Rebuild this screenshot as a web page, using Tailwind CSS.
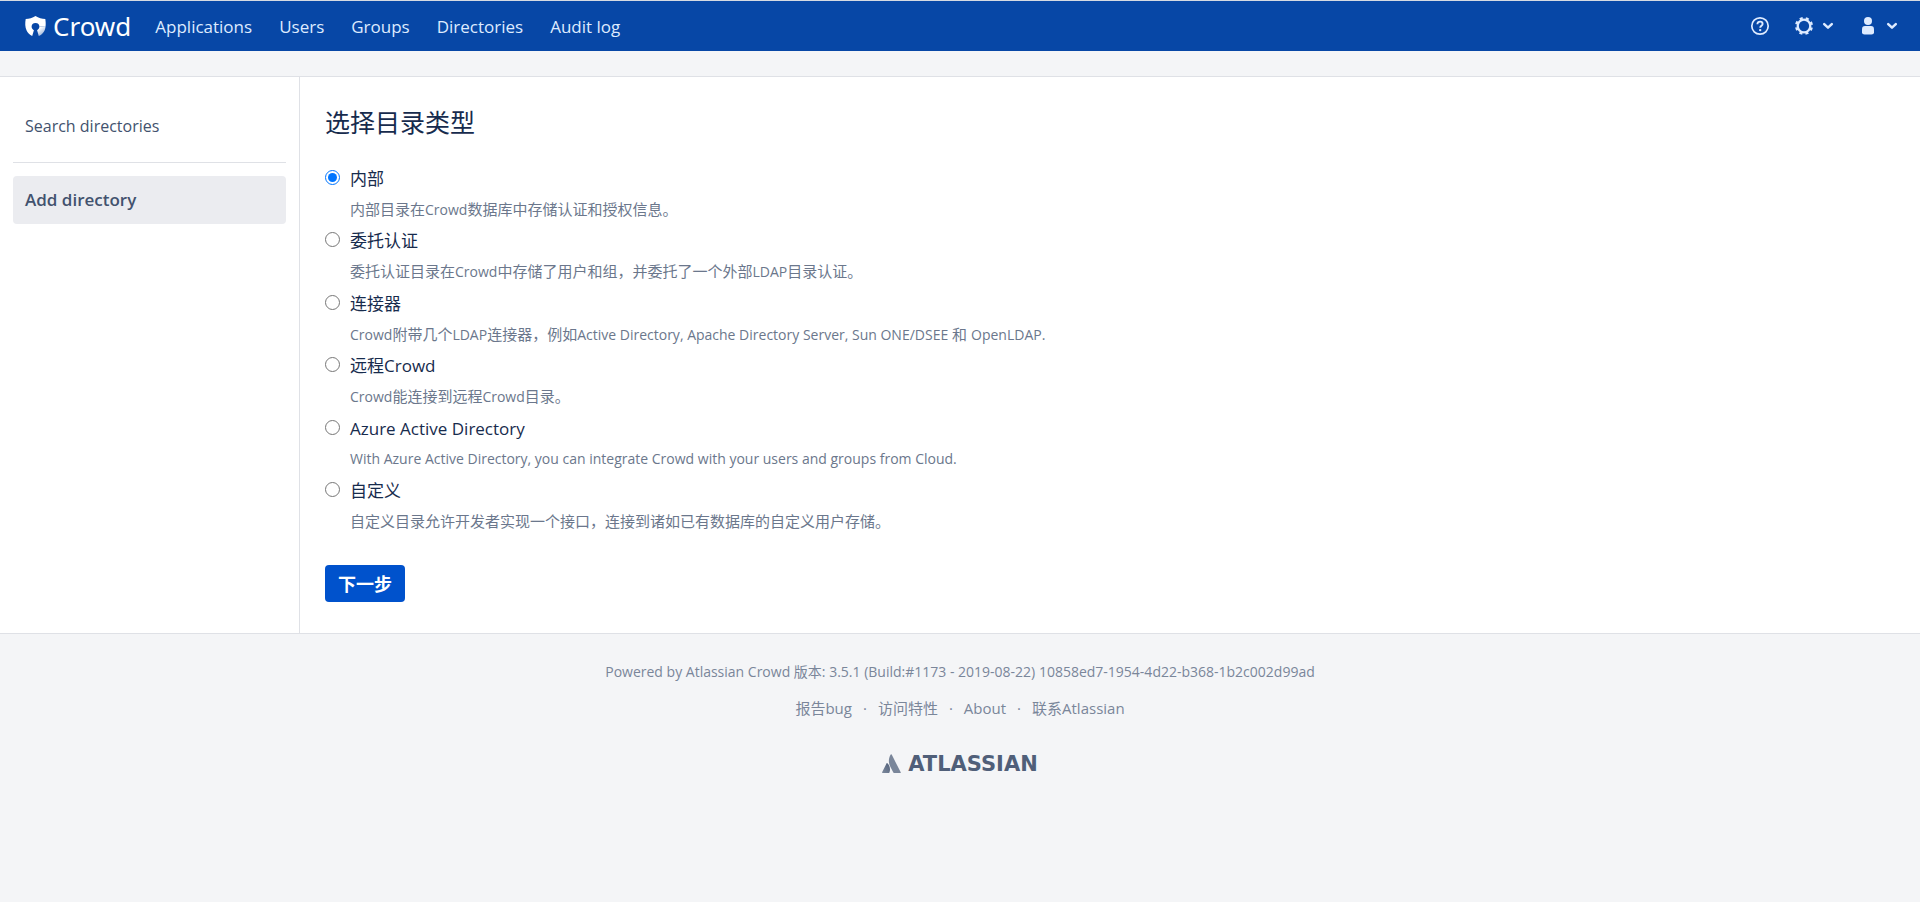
<!DOCTYPE html>
<html lang="zh-CN">
<head>
<meta charset="utf-8">
<title>选择目录类型 - Crowd</title>
<script src="https://cdn.jsdelivr.net/npm/@tailwindcss/browser@4"></script>
</head>
<body class="min-h-screen bg-[#f4f5f7] font-['Open_Sans','Noto_Sans_CJK_SC',sans-serif] text-base text-[#172b4d]">
<header class="flex h-[51px] items-center justify-between border-t border-[#d5dae2] bg-[#0747a6] pl-[25px] pr-[22px] text-[#deebff]">
  <div class="flex items-center">
    <a href="#" class="flex items-center gap-[7px] text-white">
      <svg class="h-5 w-[21px]" viewBox="0 0 21 20" aria-hidden="true">
        <defs><linearGradient id="shield" x1="0.3" y1="0.2" x2="0.8" y2="1"><stop offset="0" stop-color="#fff"/><stop offset="1" stop-color="#fff" stop-opacity=".5"/></linearGradient></defs>
        <path fill="#fff" d="M10.500 0C7.500 2 4 2.900 0.700 3C0 7 0 11 1.600 14.500C2.800 17 4.700 19 7.200 20L8.900 14.200C7.600 13.600 6.600 12.400 6.600 10.800A3.900 3.900 0 0 1 14.400 10.800L20.600 10C20.900 7.500 20.600 5 20.300 3C17 2.900 13.500 2 10.500 0Z"/>
        <path fill="url(#shield)" d="M14.400 10.800C14.400 12.400 13.400 13.600 12.100 14.200L13.800 20C18.500 18 20.400 14 20.600 10Z"/>
      </svg>
      <span class="font-['Noto_Sans',sans-serif] text-[26px] leading-8">Crowd</span>
    </a>
    <nav class="ml-6 flex items-center gap-[27px] pt-px text-[17px]">
      <a href="#">Applications</a><a href="#">Users</a><a href="#">Groups</a><a href="#">Directories</a><a href="#">Audit log</a>
    </nav>
  </div>
  <div class="flex items-center gap-6">
    <button type="button" aria-label="Help">
      <svg class="size-5" viewBox="0 0 20 20" fill="none" stroke="currentColor"><circle cx="10" cy="10" r="8.200" stroke-width="1.700"/><path stroke-width="1.900" d="M7.400 8.200C7.400 6.600 8.500 5.600 10.100 5.600S12.600 6.600 12.600 7.900C12.600 9.700 10.200 9.700 10.200 11.700"/><circle cx="10.200" cy="14.100" r="1.200" fill="currentColor" stroke="none"/></svg>
    </button>
    <button type="button" aria-label="Administration" class="flex items-center gap-2">
      <svg class="size-5" viewBox="0 0 20 20" fill="none" stroke="currentColor"><circle cx="10" cy="10" r="6.300" stroke-width="2.300"/><circle cx="10" cy="10" r="7.900" stroke-width="2.200" stroke-dasharray="3.100 3.104" stroke-dashoffset="-1.550"/></svg>
      <svg class="h-2 w-3" viewBox="0 0 12 8" fill="none" stroke="currentColor" stroke-width="2.500" stroke-linecap="round" stroke-linejoin="round"><path d="M2.200 2.200L6 5.700L9.800 2.200"/></svg>
    </button>
    <button type="button" aria-label="User" class="flex items-center gap-2">
      <svg class="size-5" viewBox="0 0 20 20" fill="currentColor"><circle cx="10" cy="5" r="4"/><path d="M4 13.200Q4 10 7 10H13Q16 10 16 13.200V16.500Q16 18.500 13.500 18.500H6.500Q4 18.500 4 16.500Z"/></svg>
      <svg class="h-2 w-3" viewBox="0 0 12 8" fill="none" stroke="currentColor" stroke-width="2.500" stroke-linecap="round" stroke-linejoin="round"><path d="M2.200 2.200L6 5.700L9.800 2.200"/></svg>
    </button>
  </div>
</header>
<div class="mt-[25px] flex border-y border-[#dfe1e6] bg-white">
  <aside class="w-[300px] shrink-0 border-r border-[#dfe1e6] px-[13px] pt-[25px]">
    <nav class="text-[17px] text-[#42526e]">
      <a href="#" class="flex h-12 items-center rounded px-3 text-base">Search directories</a>
      <hr class="mt-3 mb-[13px] border-[#dfe1e6]">
      <a href="#" class="flex h-12 items-center rounded bg-[#ebecf0] px-3 font-semibold" aria-current="page">Add directory</a>
    </nav>
  </aside>
  <main class="flex-1 px-[25px] pt-[30px] pb-[31px]">
    <h1 id="title" class="text-[25px] leading-[30px]">选择目录类型</h1>
    <form>
      <fieldset class="mt-7" aria-labelledby="title">
        <div class="flex items-start gap-2.5 odd:h-[62px] even:h-[63px]">
          <input id="t1" type="radio" name="type" checked class="mt-[5px] size-[15px]" aria-describedby="d1">
          <div><label for="t1" class="block text-[17px] leading-7">内部</label><p id="d1" class="mt-1 text-[15px] leading-6 text-[#6b778c]">内部目录在<span class="text-sm">Crowd</span>数据库中存储认证和授权信息。</p></div>
        </div>
        <div class="flex items-start gap-2.5 odd:h-[62px] even:h-[63px]">
          <input id="t2" type="radio" name="type" class="mt-[5px] size-[15px]" aria-describedby="d2">
          <div><label for="t2" class="block text-[17px] leading-7">委托认证</label><p id="d2" class="mt-1 text-[15px] leading-6 text-[#6b778c]">委托认证目录在<span class="text-sm">Crowd</span>中存储了用户和组，并委托了一个外部<span class="text-sm">LDAP</span>目录认证。</p></div>
        </div>
        <div class="flex items-start gap-2.5 odd:h-[62px] even:h-[63px]">
          <input id="t3" type="radio" name="type" class="mt-[5px] size-[15px]" aria-describedby="d3">
          <div><label for="t3" class="block text-[17px] leading-7">连接器</label><p id="d3" class="mt-1 text-[15px] leading-6 text-[#6b778c]"><span class="text-sm">Crowd</span>附带几个<span class="text-sm">LDAP</span>连接器，例如<span class="text-sm">Active Directory, Apache Directory Server, Sun ONE/DSEE</span> 和 <span class="text-sm">OpenLDAP.</span></p></div>
        </div>
        <div class="flex items-start gap-2.5 odd:h-[62px] even:h-[63px]">
          <input id="t4" type="radio" name="type" class="mt-[5px] size-[15px]" aria-describedby="d4">
          <div><label for="t4" class="block text-[17px] leading-7">远程Crowd</label><p id="d4" class="mt-1 text-[15px] leading-6 text-[#6b778c]"><span class="text-sm">Crowd</span>能连接到远程<span class="text-sm">Crowd</span>目录。</p></div>
        </div>
        <div class="flex items-start gap-2.5 odd:h-[62px] even:h-[63px]">
          <input id="t5" type="radio" name="type" class="mt-[5px] size-[15px]" aria-describedby="d5">
          <div><label for="t5" class="block text-[17px] leading-7">Azure Active Directory</label><p id="d5" class="mt-1 text-sm leading-6 text-[#6b778c]">With Azure Active Directory, you can integrate Crowd with your users and groups from Cloud.</p></div>
        </div>
        <div class="flex items-start gap-2.5 odd:h-[62px] even:h-[63px]">
          <input id="t6" type="radio" name="type" class="mt-[5px] size-[15px]" aria-describedby="d6">
          <div><label for="t6" class="block text-[17px] leading-7">自定义</label><p id="d6" class="mt-1 text-[15px] leading-6 text-[#6b778c]">自定义目录允许开发者实现一个接口，连接到诸如已有数据库的自定义用户存储。</p></div>
        </div>
      </fieldset>
      <button type="button" class="mt-[25px] flex h-[37px] items-center rounded bg-[#0052cc] px-[13px] pt-px text-lg font-bold text-white">下一步</button>
    </form>
  </main>
</div>
<footer class="flex flex-col items-center pt-[26px] text-sm leading-6 text-[#7a869a]">
  <p>Powered by Atlassian Crowd 版本: 3.5.1 (Build:#1173 - 2019-08-22) 10858ed7-1954-4d22-b368-1b2c002d99ad</p>
  <ul class="mt-3 flex gap-[11px] text-[15px] leading-6">
    <li><a href="#">报告bug</a></li><li aria-hidden="true">·</li><li><a href="#">访问特性</a></li><li aria-hidden="true">·</li><li><a href="#">About</a></li><li aria-hidden="true">·</li><li><a href="#">联系Atlassian</a></li>
  </ul>
  <a href="#" class="mt-[31px] flex items-center gap-[7px] text-[#505f79]">
    <svg class="h-5 w-[19px]" viewBox="0 0 19 20" aria-hidden="true">
      <defs><linearGradient id="peak" x1="1" y1="0" x2="0.2" y2="1"><stop offset="0" stop-color="#505f79"/><stop offset="1" stop-color="#7a869a"/></linearGradient></defs>
      <path fill="url(#peak)" d="M5.400 9.300C5.100 8.900 4.700 8.900 4.500 9.400L0.100 18.300Q-0.100 19 0.600 19H6.800Q7.200 19 7.400 18.500C8.700 15.500 7.900 11.700 5.400 9.300Z"/>
      <path fill="#7a869a" d="M8.700 0.600C6.300 4.500 6.400 8.800 8.100 12.200L11.300 18.600Q11.500 19 12 19H18.300Q19 19 18.700 18.300L9.700 0.600Q9.200 -0.100 8.700 0.600Z"/>
    </svg>
    <span class="pt-px font-['DejaVu_Sans',sans-serif] text-[21px] font-bold leading-6">ATLASSIAN</span>
  </a>
</footer>
</body>
</html>
